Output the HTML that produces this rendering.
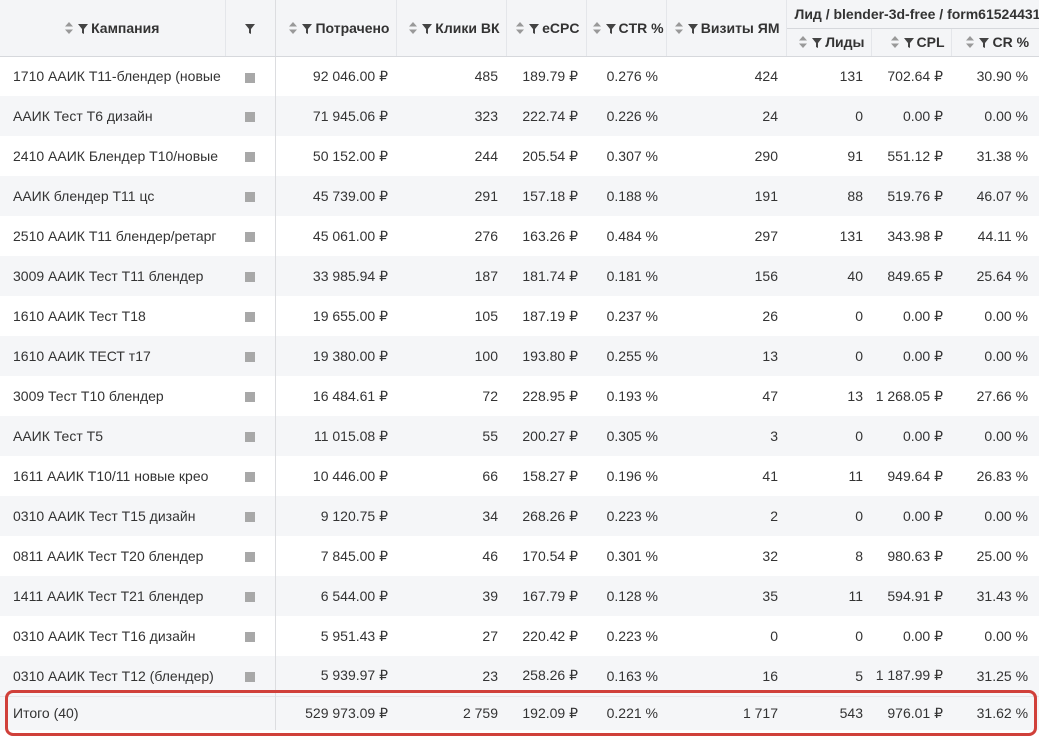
<!DOCTYPE html>
<html><head><meta charset="utf-8"><style>
*{margin:0;padding:0;box-sizing:border-box}
body{width:1039px;height:738px;overflow:hidden;background:#fff;font-family:"Liberation Sans",Arial,sans-serif;font-size:14px;color:#333}
table{border-collapse:collapse;table-layout:fixed;width:1039px;position:absolute;left:0;top:0}
th{background:#f4f5f7;font-weight:bold;color:#333;white-space:nowrap;border-right:1px solid #e4e6ea;border-bottom:1px solid #d6d8dc;font-size:14px;padding:0 6px;text-align:right;vertical-align:middle}
td{height:40px;white-space:nowrap;overflow:hidden;text-align:right;padding:0 8px 0 0}
tr.g td{background:#f5f6f8}
td.n{text-align:left;padding-left:13px;padding-right:6px;text-overflow:clip}
td.sq{text-align:center;padding:0}
td.sq i{display:inline-block;width:10px;height:10px;background:#a8a8a8;vertical-align:middle}
.bl{border-right:1px solid #dcdde0}
svg{vertical-align:-1px}
.s{margin-right:5px}
.f{margin-right:3px}
tr.t td{background:#f5f6f8;height:34px;border-top:1px solid #e6e7ea}
td.c{padding-right:11px}
.red{position:absolute;left:5px;top:690px;width:1032px;height:46px;border:3px solid #d0403a;border-radius:8px}
</style></head><body>
<svg width="0" height="0" style="position:absolute"><defs>
<symbol id="so" viewBox="0 0 8 12"><path d="M4 0L8 4.5H0Z M4 12L8 7.5H0Z" fill="#999"/></symbol>
<symbol id="fu" viewBox="0 0 10 10"><path d="M0 0H10L6 5V10L4 9V5Z" fill="#444"/></symbol>
</defs></svg>
<table>
<colgroup><col style="width:225px"><col style="width:50px"><col style="width:121px"><col style="width:110px"><col style="width:80px"><col style="width:80px"><col style="width:120px"><col style="width:85px"><col style="width:80px"><col style="width:88px"></colgroup>
<tr style="height:28px">
<th rowspan="2" style="text-align:center"><svg class="s" width="8" height="12"><use href="#so"/></svg><svg class="f" width="10" height="10"><use href="#fu"/></svg>Кампания</th>
<th rowspan="2" style="text-align:center" class="bl"><svg width="10" height="10"><use href="#fu"/></svg></th>
<th rowspan="2"><svg class="s" width="8" height="12"><use href="#so"/></svg><svg class="f" width="10" height="10"><use href="#fu"/></svg>Потрачено</th>
<th rowspan="2"><svg class="s" width="8" height="12"><use href="#so"/></svg><svg class="f" width="10" height="10"><use href="#fu"/></svg>Клики ВК</th>
<th rowspan="2"><svg class="s" width="8" height="12"><use href="#so"/></svg><svg class="f" width="10" height="10"><use href="#fu"/></svg>eCPC</th>
<th rowspan="2"><svg class="s" width="8" height="12"><use href="#so"/></svg><svg class="f" width="10" height="10"><use href="#fu"/></svg>CTR %</th>
<th rowspan="2"><svg class="s" width="8" height="12"><use href="#so"/></svg><svg class="f" width="10" height="10"><use href="#fu"/></svg>Визиты ЯМ</th>
<th colspan="3" style="text-align:left;padding-left:8px;overflow:hidden">Лид / blender-3d-free / form61524431</th>
</tr>
<tr style="height:28px">
<th><svg class="s" width="8" height="12"><use href="#so"/></svg><svg class="f" width="10" height="10"><use href="#fu"/></svg>Лиды</th>
<th><svg class="s" width="8" height="12"><use href="#so"/></svg><svg class="f" width="10" height="10"><use href="#fu"/></svg>CPL</th>
<th style="border-right:0;padding-right:10px"><svg class="s" width="8" height="12"><use href="#so"/></svg><svg class="f" width="10" height="10"><use href="#fu"/></svg>CR %</th>
</tr>
<tr><td class="n">1710 ААИК Т11-блендер (новые</td><td class="sq bl"><i></i></td><td>92 046.00 ₽</td><td>485</td><td>189.79 ₽</td><td>0.276 %</td><td>424</td><td>131</td><td>702.64 ₽</td><td class="c">30.90 %</td></tr>
<tr class="g"><td class="n">ААИК Тест Т6 дизайн</td><td class="sq bl"><i></i></td><td>71 945.06 ₽</td><td>323</td><td>222.74 ₽</td><td>0.226 %</td><td>24</td><td>0</td><td>0.00 ₽</td><td class="c">0.00 %</td></tr>
<tr><td class="n">2410 ААИК Блендер Т10/новые</td><td class="sq bl"><i></i></td><td>50 152.00 ₽</td><td>244</td><td>205.54 ₽</td><td>0.307 %</td><td>290</td><td>91</td><td>551.12 ₽</td><td class="c">31.38 %</td></tr>
<tr class="g"><td class="n">ААИК блендер Т11 цс</td><td class="sq bl"><i></i></td><td>45 739.00 ₽</td><td>291</td><td>157.18 ₽</td><td>0.188 %</td><td>191</td><td>88</td><td>519.76 ₽</td><td class="c">46.07 %</td></tr>
<tr><td class="n">2510 ААИК Т11 блендер/ретарг</td><td class="sq bl"><i></i></td><td>45 061.00 ₽</td><td>276</td><td>163.26 ₽</td><td>0.484 %</td><td>297</td><td>131</td><td>343.98 ₽</td><td class="c">44.11 %</td></tr>
<tr class="g"><td class="n">3009 ААИК Тест Т11 блендер</td><td class="sq bl"><i></i></td><td>33 985.94 ₽</td><td>187</td><td>181.74 ₽</td><td>0.181 %</td><td>156</td><td>40</td><td>849.65 ₽</td><td class="c">25.64 %</td></tr>
<tr><td class="n">1610 ААИК Тест Т18</td><td class="sq bl"><i></i></td><td>19 655.00 ₽</td><td>105</td><td>187.19 ₽</td><td>0.237 %</td><td>26</td><td>0</td><td>0.00 ₽</td><td class="c">0.00 %</td></tr>
<tr class="g"><td class="n">1610 ААИК ТЕСТ т17</td><td class="sq bl"><i></i></td><td>19 380.00 ₽</td><td>100</td><td>193.80 ₽</td><td>0.255 %</td><td>13</td><td>0</td><td>0.00 ₽</td><td class="c">0.00 %</td></tr>
<tr><td class="n">3009 Тест Т10 блендер</td><td class="sq bl"><i></i></td><td>16 484.61 ₽</td><td>72</td><td>228.95 ₽</td><td>0.193 %</td><td>47</td><td>13</td><td>1 268.05 ₽</td><td class="c">27.66 %</td></tr>
<tr class="g"><td class="n">ААИК Тест Т5</td><td class="sq bl"><i></i></td><td>11 015.08 ₽</td><td>55</td><td>200.27 ₽</td><td>0.305 %</td><td>3</td><td>0</td><td>0.00 ₽</td><td class="c">0.00 %</td></tr>
<tr><td class="n">1611 ААИК Т10/11 новые крео</td><td class="sq bl"><i></i></td><td>10 446.00 ₽</td><td>66</td><td>158.27 ₽</td><td>0.196 %</td><td>41</td><td>11</td><td>949.64 ₽</td><td class="c">26.83 %</td></tr>
<tr class="g"><td class="n">0310 ААИК Тест Т15 дизайн</td><td class="sq bl"><i></i></td><td>9 120.75 ₽</td><td>34</td><td>268.26 ₽</td><td>0.223 %</td><td>2</td><td>0</td><td>0.00 ₽</td><td class="c">0.00 %</td></tr>
<tr><td class="n">0811 ААИК Тест Т20 блендер</td><td class="sq bl"><i></i></td><td>7 845.00 ₽</td><td>46</td><td>170.54 ₽</td><td>0.301 %</td><td>32</td><td>8</td><td>980.63 ₽</td><td class="c">25.00 %</td></tr>
<tr class="g"><td class="n">1411 ААИК Тест Т21 блендер</td><td class="sq bl"><i></i></td><td>6 544.00 ₽</td><td>39</td><td>167.79 ₽</td><td>0.128 %</td><td>35</td><td>11</td><td>594.91 ₽</td><td class="c">31.43 %</td></tr>
<tr><td class="n">0310 ААИК Тест Т16 дизайн</td><td class="sq bl"><i></i></td><td>5 951.43 ₽</td><td>27</td><td>220.42 ₽</td><td>0.223 %</td><td>0</td><td>0</td><td>0.00 ₽</td><td class="c">0.00 %</td></tr>
<tr class="g"><td class="n">0310 ААИК Тест Т12 (блендер)</td><td class="sq bl"><i></i></td><td>5 939.97 ₽</td><td>23</td><td>258.26 ₽</td><td>0.163 %</td><td>16</td><td>5</td><td>1 187.99 ₽</td><td class="c">31.25 %</td></tr>
<tr class="t"><td class="n">Итого (40)</td><td class="bl"></td><td>529 973.09 ₽</td><td>2 759</td><td>192.09 ₽</td><td>0.221 %</td><td>1 717</td><td>543</td><td>976.01 ₽</td><td class="c">31.62 %</td></tr>
</table>
<div class="red"></div>
</body></html>
